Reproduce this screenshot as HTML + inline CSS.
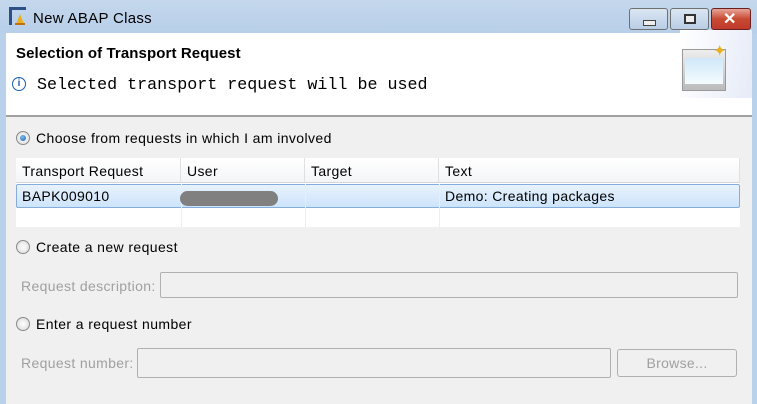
<!DOCTYPE html>
<html><head><style>
body{margin:0;width:757px;height:404px;overflow:hidden;font-family:"Liberation Sans",sans-serif;font-size:14px;background:#b9d1ea;position:relative}
.a{position:absolute}
.title{left:0;top:0;width:757px;height:33px;background:linear-gradient(#c4d7ec,#b8cfe9)}
.client{left:6px;top:33px;width:746px;height:371px;background:#f0f0f0}
.head{left:6px;top:33px;width:746px;height:82px;background:#fff;border-bottom:2px solid #a0a0a0}
.radio{width:12px;height:12px;border-radius:50%;border:1px solid #8a8a8a;background:radial-gradient(#fff,#d8d8d8)}
.sel::after{content:"";position:absolute;left:3px;top:3px;width:6px;height:6px;border-radius:50%;background:radial-gradient(circle at 40% 35%,#7ac0f0,#1d5ea8)}
.lbl{color:#000;font-size:14px;letter-spacing:0.4px}
.dis{color:#a0a0a0;font-size:14px;letter-spacing:0.35px}
.box{border:1px solid #b0b0b0;background:#f0f0f0;border-radius:2px}
.th{top:158px;height:25px;background:linear-gradient(#fff,#f4f5f7);border-right:1px solid #e0e0e0;border-bottom:1px solid #d5d5d5;line-height:27px;padding-left:6px;box-sizing:border-box;letter-spacing:0.35px}
.btn{border-radius:3px;border:1px solid #707070}
</style></head><body>
<div class="a title"></div>
<svg class="a" style="left:8px;top:6px" width="20" height="20"><path d="M1 1h17v3H4v15H1z" fill="#2c4f86"/><path d="M8 18l4-10 4 10z" fill="#e8b020"/><rect x="7" y="17" width="10" height="2" fill="#c07010"/></svg>
<div class="a" style="left:33px;top:10px;font-size:15px;color:#000;letter-spacing:0.3px">New ABAP Class</div>
<div class="a btn" style="left:629px;top:8px;width:37px;height:20px;background:linear-gradient(#dbe6f3,#b9cde5)"><div class="a" style="left:13px;top:11px;width:11px;height:4px;background:#eee;border:1px solid #444"></div></div>
<div class="a btn" style="left:670px;top:8px;width:37px;height:20px;background:linear-gradient(#dbe6f3,#b9cde5)"><div class="a" style="left:13px;top:5px;width:8px;height:6px;border:2px solid #333;background:#eee"></div></div>
<div class="a btn" style="left:711px;top:8px;width:38px;height:20px;background:linear-gradient(#e8a598,#c84a32 50%,#c0392b);border-color:#6a2020"><div class="a" style="left:11px;top:0;color:#fff;font-weight:bold;font-size:16px">✕</div></div>
<div class="a client"></div>
<div class="a head"></div>
<div class="a" style="left:680px;top:30px;width:72px;height:68px;background:linear-gradient(100deg,#fff,#e6ebf8)"></div>
<div class="a" style="left:682px;top:49px;width:42px;height:40px;background:linear-gradient(#eee,#bbb);border:1px solid #999"><div class="a" style="left:2px;top:8px;width:38px;height:26px;background:linear-gradient(#cfe8f8,#f4fbff)"></div></div>
<div class="a" style="left:713px;top:41px;color:#e8b020;font-size:16px">✦</div>
<div class="a" style="left:16px;top:45px;font-weight:bold;font-size:15px;letter-spacing:0.1px">Selection of Transport Request</div>
<div class="a" style="left:12px;top:77px;width:12px;height:12px;border:1px solid #1a5cb0;border-radius:50%;color:#1a5cb0;font-size:10px;text-align:center;line-height:12px;font-weight:bold">i</div>
<div class="a" style="left:37px;top:76px;font-family:'Liberation Mono',monospace;font-size:16.7px">Selected transport request will be used</div>

<div class="a radio sel" style="left:16px;top:131px"></div>
<div class="a lbl" style="left:36px;top:130px">Choose from requests in which I am involved</div>
<div class="a" style="left:16px;top:158px;width:724px;height:69px;background:#fff"></div>
<div class="a th" style="left:16px;width:165px">Transport Request</div>
<div class="a th" style="left:181px;width:124px">User</div>
<div class="a th" style="left:305px;width:134px">Target</div>
<div class="a th" style="left:439px;width:301px">Text</div>
<div class="a" style="left:16px;top:184px;width:722px;height:22px;background:linear-gradient(#e8f2fd,#cde4fb);border:1px solid #84acdd;border-radius:2px"></div>
<div class="a" style="left:181px;top:184px;width:1px;height:43px;background:#e8eef6"></div>
<div class="a" style="left:305px;top:184px;width:1px;height:43px;background:#e8eef6"></div>
<div class="a" style="left:439px;top:184px;width:1px;height:43px;background:#e8eef6"></div>
<div class="a" style="left:22px;top:188px;letter-spacing:0.35px">BAPK009010</div>
<div class="a" style="left:180px;top:191px;width:98px;height:15px;border-radius:8px;background:#808080"></div>
<div class="a" style="left:445px;top:188px;letter-spacing:0.35px">Demo: Creating packages</div>

<div class="a radio" style="left:16px;top:240px"></div>
<div class="a lbl" style="left:36px;top:239px">Create a new request</div>
<div class="a dis" style="left:21px;top:278px">Request description:</div>
<div class="a box" style="left:160px;top:272px;width:576px;height:24px"></div>
<div class="a radio" style="left:16px;top:317px"></div>
<div class="a lbl" style="left:36px;top:316px">Enter a request number</div>
<div class="a dis" style="left:21px;top:355px">Request number:</div>
<div class="a box" style="left:137px;top:348px;width:472px;height:28px"></div>
<div class="a box" style="left:617px;top:349px;width:118px;height:26px;border-radius:3px;text-align:center;line-height:26px;color:#a0a0a0;letter-spacing:0.3px">Browse...</div>
</body></html>
